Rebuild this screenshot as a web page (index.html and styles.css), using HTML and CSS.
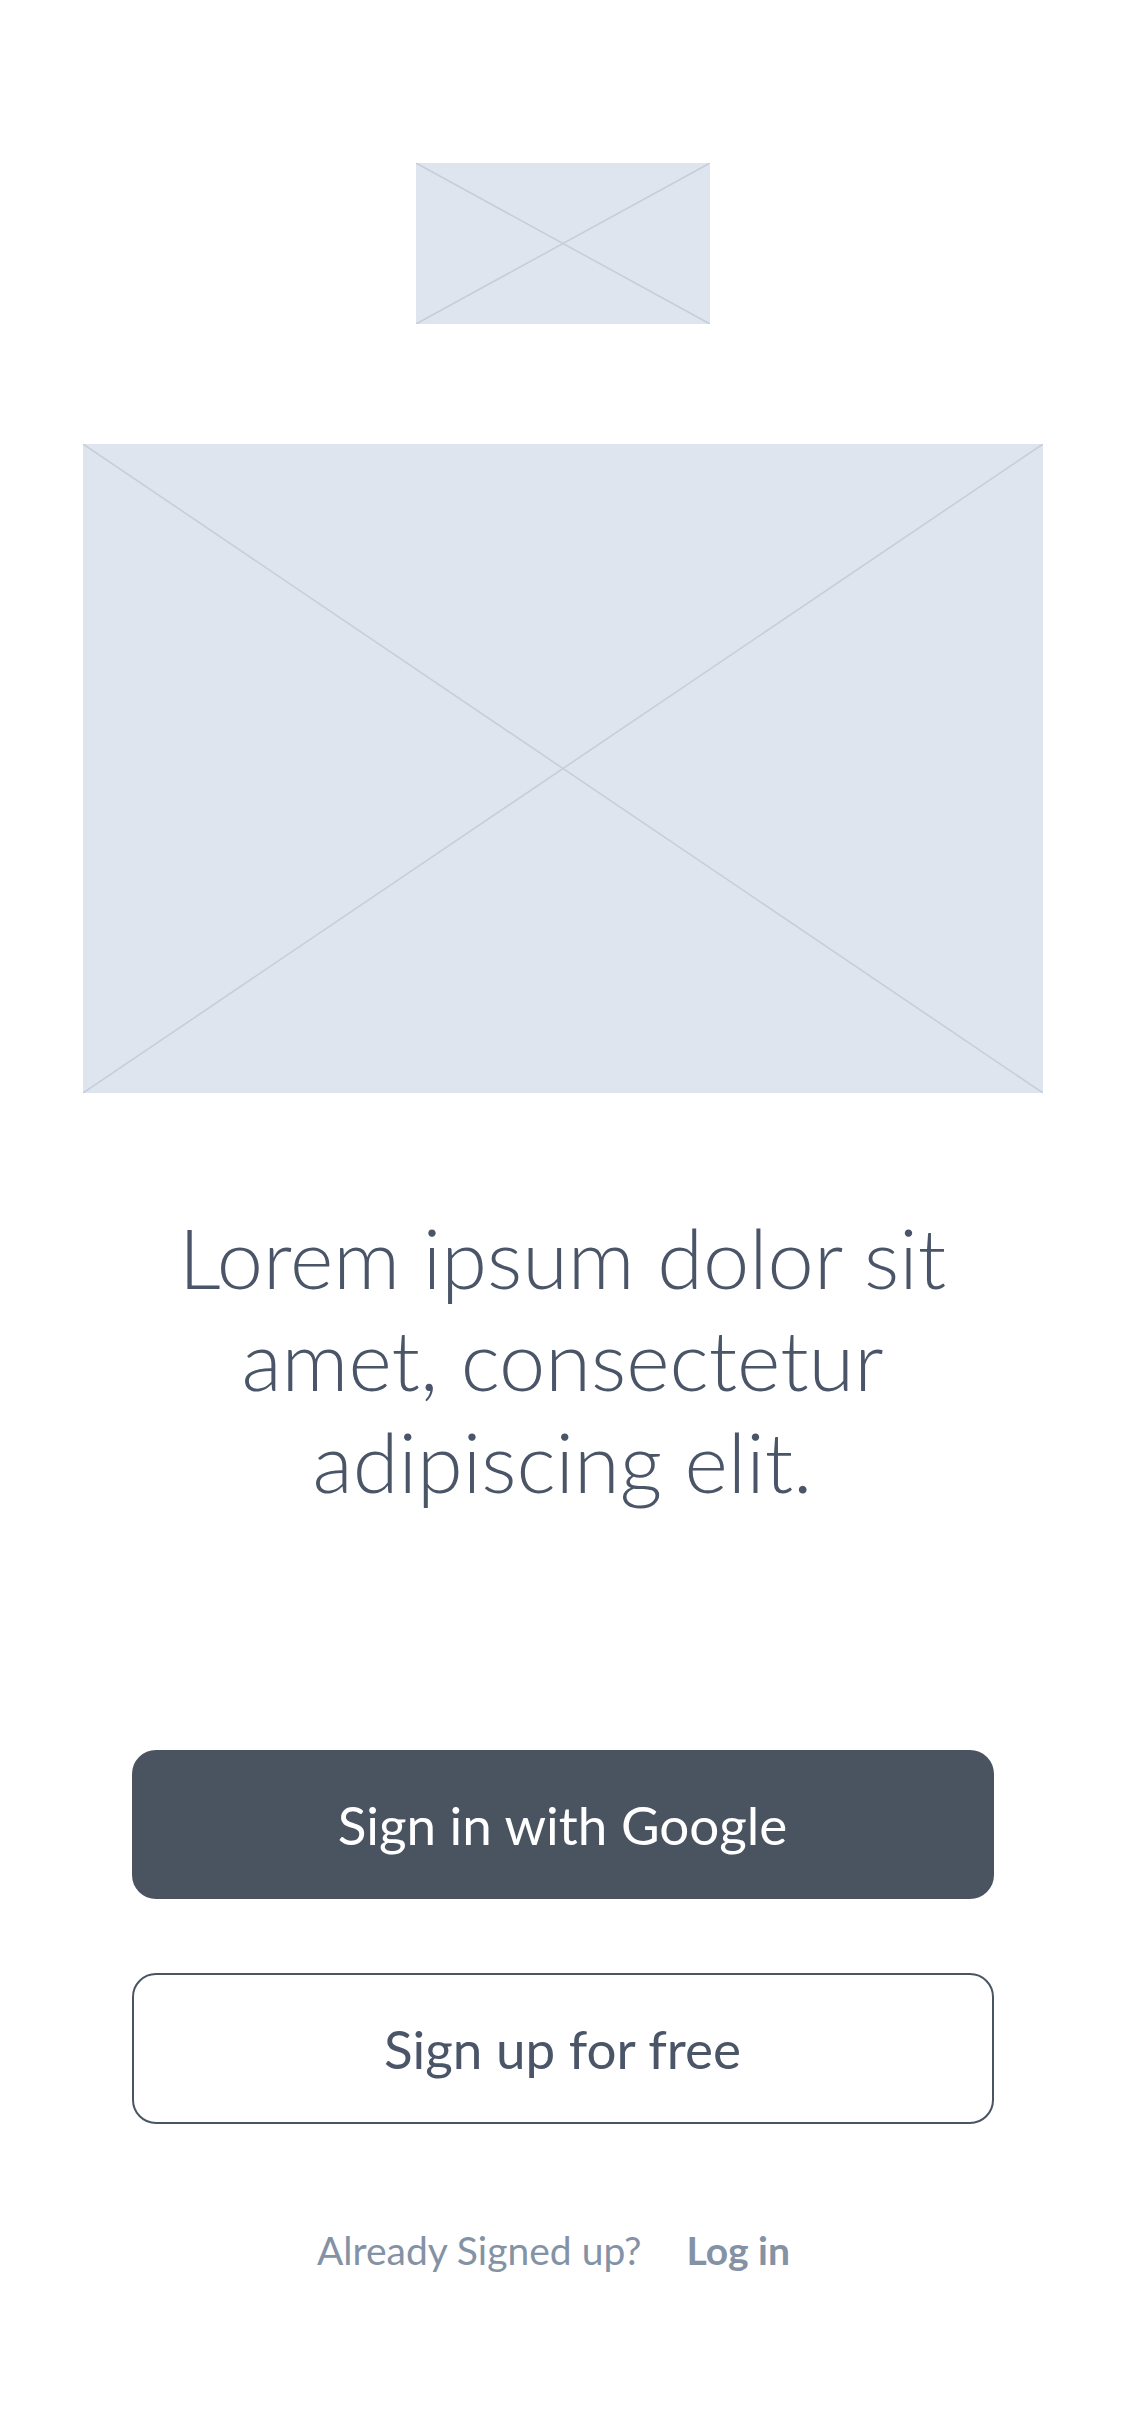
FILE: index.html
```html
<!DOCTYPE html>
<html lang="en">
<head>
<meta charset="utf-8">
<title>Welcome</title>
<link rel="stylesheet" href="styles.css">
</head>
<body>
<main class="screen">
  <div class="placeholder logo">
    <svg class="cross" viewBox="0 0 100 100" preserveAspectRatio="none" aria-hidden="true">
      <line x1="0" y1="0" x2="100" y2="100" vector-effect="non-scaling-stroke"/>
      <line x1="100" y1="0" x2="0" y2="100" vector-effect="non-scaling-stroke"/>
    </svg>
  </div>
  <div class="placeholder hero">
    <svg class="cross" viewBox="0 0 100 100" preserveAspectRatio="none" aria-hidden="true">
      <line x1="0" y1="0" x2="100" y2="100" vector-effect="non-scaling-stroke"/>
      <line x1="100" y1="0" x2="0" y2="100" vector-effect="non-scaling-stroke"/>
    </svg>
  </div>
  <h1 class="headline">Lorem ipsum dolor sit amet, consectetur adipiscing elit.</h1>
  <div class="actions">
    <button class="btn btn-primary" type="button">Sign in with Google</button>
    <button class="btn btn-outline" type="button">Sign up for free</button>
  </div>
  <p class="footer">
    <span class="footer-label">Already Signed up?</span>
    <a class="footer-link" href="#">Log in</a>
  </p>
</main>
</body>
</html>
```

FILE: styles.css
```css
* {
  box-sizing: border-box;
}

html, body {
  margin: 0;
  padding: 0;
  background: #ffffff;
}

body {
  font-family: Lato, "Open Sans", "Liberation Sans", sans-serif;
  color: #4a5568;
}

.screen {
  width: 1125px;
  min-height: 2436px;
  display: flex;
  flex-direction: column;
  align-items: center;
  padding-top: 163px;
}

.placeholder {
  background: #dfe5ee;
  position: relative;
  flex-shrink: 0;
}

.cross {
  display: block;
  width: 100%;
  height: 100%;
}

.cross line {
  stroke: #c5ceda;
  stroke-width: 1.6;
}

.logo {
  width: 294px;
  height: 161px;
}

.hero {
  width: 960px;
  height: 649px;
  margin-top: 120px;
}

.headline {
  margin: 113px 0 0;
  width: 880px;
  text-align: center;
  font-weight: 300;
  font-size: 83px;
  line-height: 102px;
  color: #4a5568;
}

.actions {
  margin-top: 238px;
  display: flex;
  flex-direction: column;
  gap: 74px;
  width: 862px;
}

.btn {
  display: flex;
  align-items: center;
  justify-content: center;
  width: 100%;
  height: 150px;
  border-radius: 24px;
  font-family: Lato, "Open Sans", "Liberation Sans", sans-serif;
  font-size: 53px;
  font-weight: 400;
  padding: 0;
  cursor: pointer;
}

.btn-primary {
  background: #4a5461;
  color: #ffffff;
  border: none;
  height: 149px;
}

.btn-outline {
  background: #ffffff;
  color: #4a5568;
  border: 2px solid #4a5563;
  height: 151px;
}

.footer {
  margin: 103px 0 0;
  padding-right: 18px;
  display: flex;
  gap: 45px;
  font-size: 39px;
  line-height: 46px;
  color: #8492a6;
}

.footer-label {
  font-weight: 400;
}

.footer-link {
  font-weight: 700;
  color: #8492a6;
  text-decoration: none;
}
```
